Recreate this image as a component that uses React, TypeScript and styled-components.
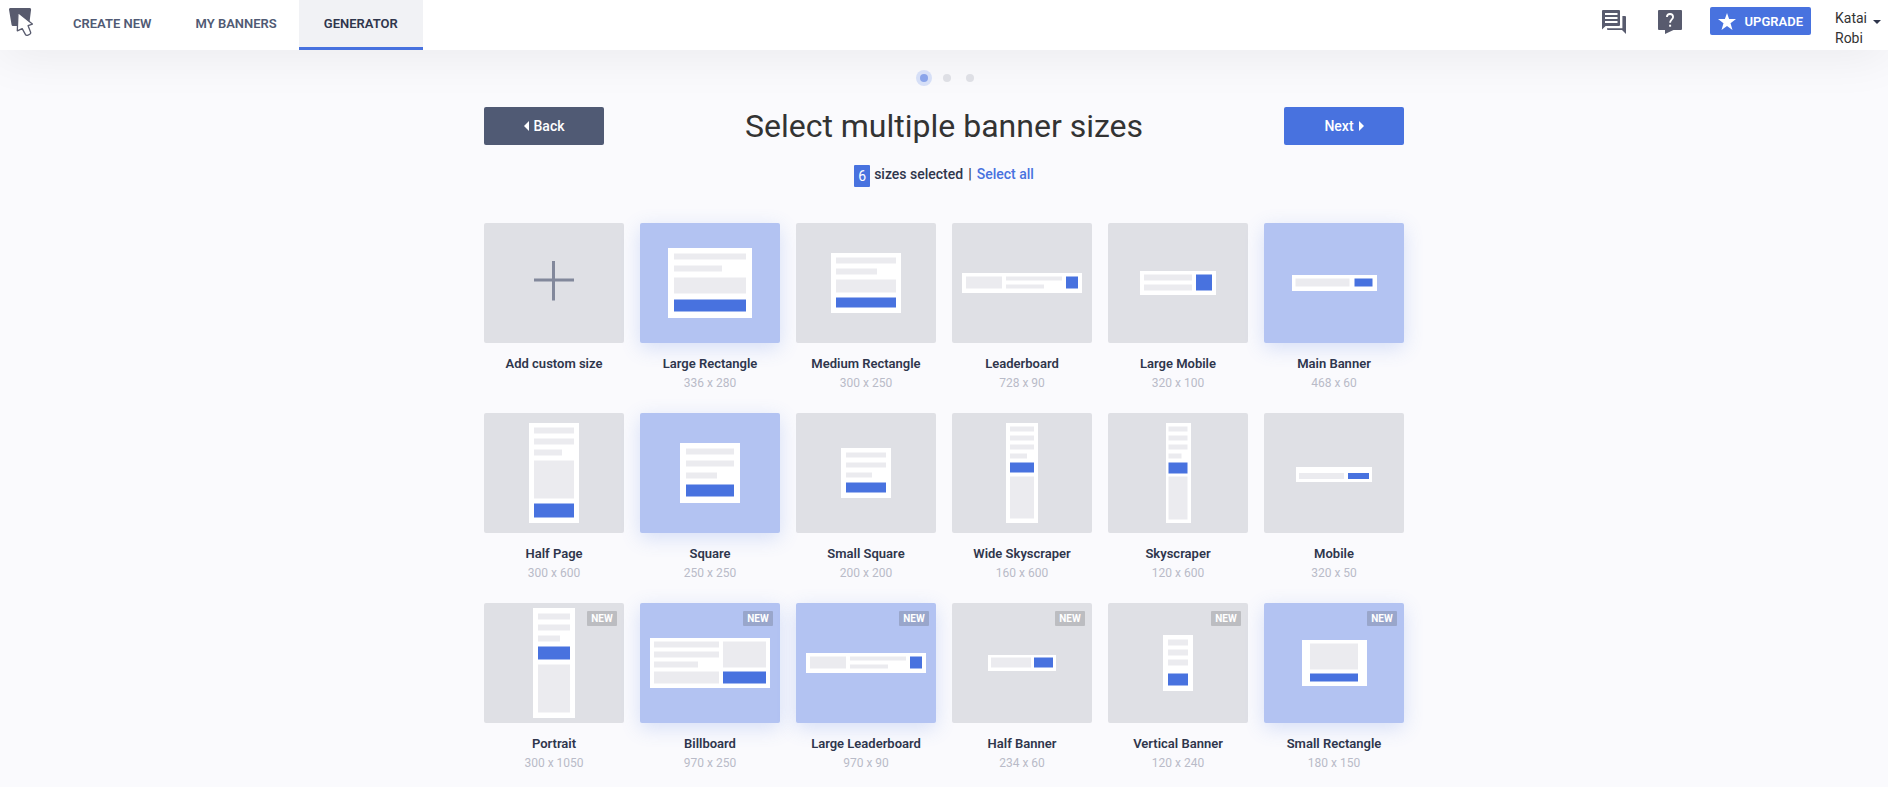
import { useState } from "react";
import styled, { createGlobalStyle } from "styled-components";

const blue = "#4872df";
const ink = "#2f364c";
const slate = "#505a74";

const GlobalStyle = createGlobalStyle`
  *, *::before, *::after { box-sizing: border-box; }
  body {
    margin: 0;
    background: #fafafd;
    color: ${ink};
    font-family: Roboto, "Liberation Sans", sans-serif;
    font-size: 14px;
    -webkit-font-smoothing: antialiased;
  }
  button { font: inherit; border: 0; padding: 0; cursor: pointer; background: none; }
  a { text-decoration: none; }
`;

const Header = styled.header`
  display: flex;
  align-items: flex-start;
  height: 50px;
  padding: 0 7px 0 8px;
  background: #fff;
  box-shadow: 0 5px 50px rgba(0, 0, 0, 0.07);
`;

const LogoLink = styled.a`
  display: flex;
  width: 43px;
  padding-top: 8px;
`;

const Nav = styled.nav`
  display: flex;
`;

const NavLink = styled.a<{ $active?: boolean }>`
  height: 50px;
  padding: 0 ${(p) => (p.$active ? 25 : 22)}px;
  line-height: 47px;
  font-size: 13px;
  font-weight: 600;
  color: ${(p) => (p.$active ? ink : slate)};
  background: ${(p) => (p.$active ? "#f1f2f5" : "transparent")};
  border-bottom: 3px solid ${(p) => (p.$active ? blue : "transparent")};
`;

const Tools = styled.div`
  display: flex;
  align-items: flex-start;
  margin-left: auto;
`;

const IconGroup = styled.div`
  display: flex;
  gap: 32px;
  margin: 10px 28px 0 0;
`;

const IconButton = styled.button`
  display: flex;
  color: #585b6e;
`;

const UpgradeButton = styled.button`
  display: flex;
  align-items: center;
  justify-content: space-between;
  width: 101px;
  height: 28px;
  margin: 7px 24px 0 0;
  padding: 0 8px;
  border-radius: 2px;
  background: ${blue};
  color: #fff;
  font-size: 13px;
  font-weight: 600;
`;

const UserButton = styled.button`
  display: flex;
  gap: 6px;
  margin-top: 8px;
  color: #333;
  font-size: 14px;
  line-height: 20px;
  text-align: left;
`;

const UserName = styled.span`
  width: 32px;
`;

const Caret = styled.svg`
  margin-top: 12px;
`;

const Main = styled.main`
  width: 100%;
  max-width: 952px;
  margin: 0 auto;
  padding: 20px 16px 0;
`;

const Steps = styled.ol`
  display: flex;
  justify-content: center;
  align-items: center;
  gap: 15px;
  height: 16px;
  margin: 0;
  padding: 0 0 0 6px;
  list-style: none;
`;

const Step = styled.li<{ $active?: boolean }>`
  width: 8px;
  height: 8px;
  border-radius: 50%;
  background: ${(p) => (p.$active ? "#8aa4ea" : "#dedfe5")};
  box-shadow: ${(p) => (p.$active ? "0 0 0 4px #d6dff7" : "none")};
`;

const TitleRow = styled.div`
  display: flex;
  align-items: center;
  justify-content: space-between;
  margin-top: 21px;
`;

const Title = styled.h1`
  margin: 0;
  color: #333;
  font-size: 32px;
  font-weight: 400;
  line-height: 38px;
`;

const StepButton = styled.button<{ $primary?: boolean }>`
  display: flex;
  align-items: center;
  justify-content: center;
  gap: 5px;
  width: 120px;
  height: 38px;
  border-radius: 2px;
  background: ${(p) => (p.$primary ? blue : slate)};
  color: #fff;
  font-size: 14px;
  font-weight: 500;
`;

const Summary = styled.div`
  display: flex;
  justify-content: center;
  align-items: flex-start;
  gap: 4px;
  margin-top: 20px;
  height: 22px;
  font-weight: 500;
  line-height: 18px;
`;

const Count = styled.span`
  min-width: 16px;
  height: 22px;
  padding: 0 4px;
  border-radius: 1px;
  background: ${blue};
  color: #fff;
  font-weight: 400;
  line-height: 22px;
  text-align: center;
`;

const SelectAll = styled.button`
  color: ${blue};
  font-weight: 500;
  line-height: 18px;
`;

const Divider = styled.span`
  padding: 0 1px;
`;

const Grid = styled.div`
  display: grid;
  grid-template-columns: repeat(auto-fill, 140px);
  justify-content: center;
  gap: 20px 16px;
  margin-top: 36px;
`;

const Card = styled.button`
  display: flex;
  flex-direction: column;
  align-items: center;
  justify-content: flex-start;
  height: 170px;
`;

const Tile = styled.span<{ $selected?: boolean }>`
  position: relative;
  display: block;
  width: 140px;
  height: 120px;
  border-radius: 2px;
  background: ${(p) => (p.$selected ? "#b3c3f2" : "#dfe0e5")};
  box-shadow: ${(p) => (p.$selected ? "0 5px 20px rgba(72, 114, 223, 0.2)" : "none")};
`;

const NewBadge = styled.span`
  position: absolute;
  top: 8px;
  right: 7px;
  width: 30px;
  height: 15px;
  border-radius: 1px;
  background: rgba(51, 51, 51, 0.2);
  color: #fff;
  font-size: 10px;
  font-weight: 700;
  line-height: 15px;
  text-align: center;
`;

const SizeName = styled.span`
  margin-top: 11px;
  color: ${ink};
  font-size: 13px;
  font-weight: 600;
  line-height: 19px;
`;

const SizeValue = styled.span`
  margin-top: 1px;
  color: #b9bbc8;
  font-size: 12px;
  line-height: 19px;
`;

type Rect = [x: number, y: number, w: number, h: number];

interface Size {
  name: string;
  value: string;
  frame: Rect;
  bars: Rect[];
  cta: Rect;
  isNew?: boolean;
}

const leaderboard = {
  frame: [10, 50, 120, 20] as Rect,
  bars: [[14, 53.5, 36, 12], [54, 53.5, 56, 4], [54, 61.5, 38, 4]] as Rect[],
  cta: [114, 53.5, 12, 12] as Rect,
};

const sizes: Size[] = [
  { name: "Large Rectangle", value: "336 x 280", frame: [28, 25, 84, 70], bars: [[34, 30.5, 72, 6], [34, 42.5, 48, 6], [34, 54.5, 72, 16]], cta: [34, 76.5, 72, 12] },
  { name: "Medium Rectangle", value: "300 x 250", frame: [35, 30, 70, 60], bars: [[40, 34.5, 60, 6], [40, 45.5, 41, 6], [40, 56.5, 60, 13]], cta: [40, 74.5, 60, 10] },
  { name: "Leaderboard", value: "728 x 90", ...leaderboard },
  { name: "Large Mobile", value: "320 x 100", frame: [32, 48, 76, 24], bars: [[36, 51.5, 48, 6], [36, 61.5, 48, 6]], cta: [88, 51.5, 16, 16] },
  { name: "Main Banner", value: "468 x 60", frame: [28, 52, 85, 16], bars: [[31.5, 55.5, 54, 8]], cta: [90.5, 55.5, 18, 8] },
  { name: "Half Page", value: "300 x 600", frame: [45, 10, 50, 100], bars: [[50, 14.5, 40, 6], [50, 25.5, 40, 6], [50, 36.5, 28, 6], [50, 47.5, 40, 38]], cta: [50, 90.5, 40, 14] },
  { name: "Square", value: "250 x 250", frame: [40, 30, 60, 60], bars: [[46, 35.5, 48, 6], [46, 47.5, 48, 6], [46, 59.5, 31, 6]], cta: [46, 71.5, 48, 12] },
  { name: "Small Square", value: "200 x 200", frame: [45, 35, 50, 50], bars: [[50, 39.5, 40, 5], [50, 49.5, 40, 5], [50, 59.5, 26, 5]], cta: [50, 69.5, 40, 10] },
  { name: "Wide Skyscraper", value: "160 x 600", frame: [54, 10, 32, 100], bars: [[58, 13.5, 24, 5], [58, 22.5, 24, 5], [58, 31.5, 24, 5], [58, 40.5, 17, 5], [58, 63.5, 24, 42]], cta: [58, 49.5, 24, 10] },
  { name: "Skyscraper", value: "120 x 600", frame: [58, 10, 25, 100], bars: [[60.5, 13.5, 19, 5], [60.5, 22.5, 19, 5], [60.5, 31.5, 19, 5], [60.5, 40.5, 13, 5], [60.5, 63.5, 19, 43]], cta: [60.5, 49.5, 19, 11] },
  { name: "Mobile", value: "320 x 50", frame: [32, 54, 76, 15], bars: [[35, 60, 45, 6]], cta: [84, 60, 21, 6] },
  { name: "Portrait", value: "300 x 1050", isNew: true, frame: [49, 5, 42, 110], bars: [[54, 10.5, 32, 6], [54, 21.5, 32, 6], [54, 32.5, 22, 6], [54, 61.5, 32, 48]], cta: [54, 43.5, 32, 13] },
  { name: "Billboard", value: "970 x 250", isNew: true, frame: [10, 35, 120, 50], bars: [[14, 38.5, 65, 6], [14, 48.5, 65, 6], [14, 58.5, 44, 6], [14, 68.5, 65, 12], [83, 38.5, 43, 26]], cta: [83, 68.5, 43, 12] },
  { name: "Large Leaderboard", value: "970 x 90", isNew: true, ...leaderboard },
  { name: "Half Banner", value: "234 x 60", isNew: true, frame: [36, 52, 68, 16], bars: [[39, 54.5, 40, 10]], cta: [82, 54.5, 19, 10] },
  { name: "Vertical Banner", value: "120 x 240", isNew: true, frame: [55, 32, 30, 56], bars: [[60, 36.5, 20, 6], [60, 46.5, 20, 6], [60, 56.5, 20, 6]], cta: [60, 70.5, 20, 12] },
  { name: "Small Rectangle", value: "180 x 150", isNew: true, frame: [38, 37, 65, 46], bars: [[46, 40.5, 48, 26]], cta: [46, 70.5, 48, 8] },
];

const Box = ({ rect: [x, y, width, height], fill }: { rect: Rect; fill: string }) => (
  <rect x={x} y={y} width={width} height={height} fill={fill} />
);

const Preview = ({ size }: { size: Size }) => (
  <svg width="140" height="120" viewBox="0 0 140 120" aria-hidden="true">
    <Box rect={size.frame} fill="#fff" />
    {size.bars.map((bar) => (
      <Box key={bar.join()} rect={bar} fill="#ebebef" />
    ))}
    <Box rect={size.cta} fill={blue} />
  </svg>
);

const Logo = () => (
  <svg width="26" height="29" viewBox="0 0 26 29" aria-hidden="true">
    <path d="M2.2 0H21.8Q23.3 0 23.1 1.6L21.2 16.5Q21 18 19.5 18H5Q3.7 18 3.5 16.5L1 1.6Q.8 0 2.2 0Z" fill="#585b6e" />
    <path
      d="M10 4.6L24.4 16.1 20.1 17.7 22.7 24.6Q22.9 26 20 27.1 18.1 27.8 17.5 26.6L14.2 20.6 9.3 22.8Z"
      fill="#fff"
      stroke="#585b6e"
      strokeWidth="1.3"
      strokeLinejoin="round"
    />
  </svg>
);

const ChatIcon = () => (
  <svg width="24" height="24" viewBox="0 0 24 24" aria-hidden="true">
    <path d="M0 1Q0 0 1 0H17Q18 0 18 1V15Q18 16 17 16H3.6L0 19.6Z" fill="currentColor" />
    <path d="M3 4H15.5M3 8H15.5M3 12H15.5" stroke="#fff" strokeWidth="1.8" />
    <path d="M20.4 6H23Q24 6 24 7V24L20 20H6Q5 20 5 19V18.2H20.4Z" fill="currentColor" />
  </svg>
);

const HelpIcon = () => (
  <svg width="24" height="24" viewBox="0 0 24 24" aria-hidden="true">
    <path d="M1 0H23Q24 0 24 1V19Q24 20 23 20H15.5L7 24V20H1Q0 20 0 19V1Q0 0 1 0Z" fill="currentColor" />
    <path d="M8.9 7Q9 4 12 4T15.1 7C15.1 9.4 12.1 9.4 12.1 12.8" fill="none" stroke="#fff" strokeWidth="1.8" />
    <rect x="11.1" y="14.7" width="2" height="2" fill="#fff" />
  </svg>
);

const StarIcon = () => (
  <svg width="18" height="17" viewBox="0 0 18 17" aria-hidden="true">
    <path d="M9 0L11.1 6.1H18L12.5 10.2 14.5 17 9 13 3.5 17 5.5 10.2 0 6.1H6.9Z" fill="#fff" />
  </svg>
);

const initial = ["Large Rectangle", "Main Banner", "Square", "Billboard", "Large Leaderboard", "Small Rectangle"];

export default function App() {
  const [selected, setSelected] = useState<string[]>(initial);

  const toggle = (name: string) =>
    setSelected((list) => (list.includes(name) ? list.filter((n) => n !== name) : [...list, name]));

  return (
    <>
      <GlobalStyle />
      <Header>
        <LogoLink href="#" aria-label="Home">
          <Logo />
        </LogoLink>
        <Nav>
          <NavLink href="#create">CREATE NEW</NavLink>
          <NavLink href="#banners">MY BANNERS</NavLink>
          <NavLink href="#generator" $active aria-current="page">GENERATOR</NavLink>
        </Nav>
        <Tools>
          <IconGroup>
            <IconButton aria-label="Messages"><ChatIcon /></IconButton>
            <IconButton aria-label="Help"><HelpIcon /></IconButton>
          </IconGroup>
          <UpgradeButton>
            <StarIcon />
            UPGRADE
          </UpgradeButton>
          <UserButton>
            <UserName>Katai Robi</UserName>
            <Caret width="8" height="4" viewBox="0 0 8 4" aria-hidden="true">
              <path d="M0 0H8L4 4Z" fill={ink} />
            </Caret>
          </UserButton>
        </Tools>
      </Header>
      <Main>
        <Steps aria-label="Progress">
          <Step $active aria-current="step" />
          <Step />
          <Step />
        </Steps>
        <TitleRow>
          <StepButton>
            <svg width="5" height="10" viewBox="0 0 5 10" aria-hidden="true">
              <path d="M5 0V10L0 5Z" fill="#fff" />
            </svg>
            Back
          </StepButton>
          <Title>Select multiple banner sizes</Title>
          <StepButton $primary>
            Next
            <svg width="5" height="10" viewBox="0 0 5 10" aria-hidden="true">
              <path d="M0 0V10L5 5Z" fill="#fff" />
            </svg>
          </StepButton>
        </TitleRow>
        <Summary>
          <Count>{selected.length}</Count>
          <span>sizes selected</span>
          <Divider>|</Divider>
          <SelectAll onClick={() => setSelected(sizes.map((s) => s.name))}>Select all</SelectAll>
        </Summary>
        <Grid>
          <Card>
            <Tile>
              <svg width="140" height="120" viewBox="0 0 140 120" aria-hidden="true">
                <path d="M50 57H90M69.5 38V77.5" stroke="#82889b" strokeWidth="3" />
              </svg>
            </Tile>
            <SizeName>Add custom size</SizeName>
          </Card>
          {sizes.map((size) => {
            const isSelected = selected.includes(size.name);
            return (
              <Card key={size.name} aria-pressed={isSelected} onClick={() => toggle(size.name)}>
                <Tile $selected={isSelected}>
                  <Preview size={size} />
                  {size.isNew && <NewBadge>NEW</NewBadge>}
                </Tile>
                <SizeName>{size.name}</SizeName>
                <SizeValue>{size.value}</SizeValue>
              </Card>
            );
          })}
        </Grid>
      </Main>
    </>
  );
}
